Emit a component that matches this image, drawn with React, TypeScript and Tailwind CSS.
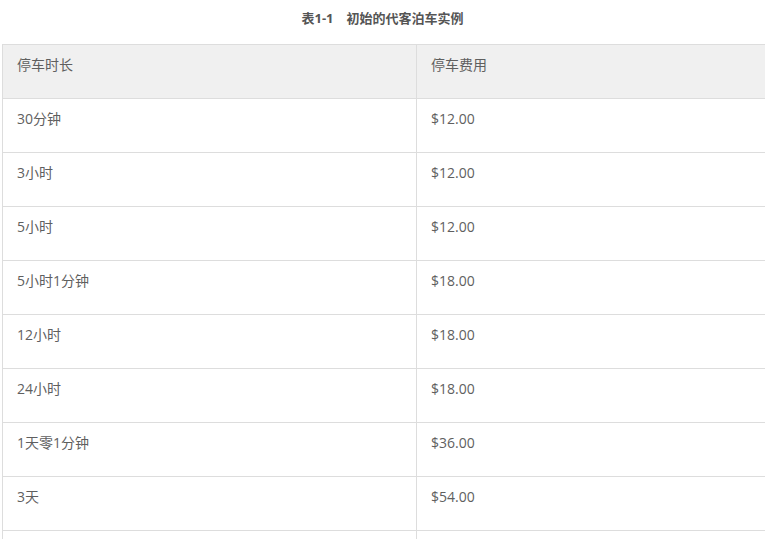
const rows: [string, string][] = [
  ["30分钟", "$12.00"],
  ["3小时", "$12.00"],
  ["5小时", "$12.00"],
  ["5小时1分钟", "$18.00"],
  ["12小时", "$18.00"],
  ["24小时", "$18.00"],
  ["1天零1分钟", "$36.00"],
  ["3天", "$54.00"],
  ["", ""],
];

export default function App() {
  return (
    <div
      className="w-[765px] h-[539px] overflow-hidden bg-white text-[#5f5f5f]"
      style={{ fontFamily: '"Open Sans", "Noto Sans CJK SC", sans-serif' }}
    >
      <div className="h-[44px] pt-[8px] text-center text-[13px] font-bold text-[#555] leading-[20px]">
        表1-1　初始的代客泊车实例
      </div>
      <div className="ml-[2px] w-[828px] border-l border-t border-[#ddd]">
        <div className="grid grid-cols-[414px_414px] h-[54px] bg-[#f0f0f0] border-b border-[#ddd] text-[14px]">
          <div className="border-r border-[#ddd] pl-[14px] pt-[9px]">停车时长</div>
          <div className="border-r border-[#ddd] pl-[14px] pt-[9px]">停车费用</div>
        </div>
        {rows.map(([a, b], i) => (
          <div key={i} className="grid grid-cols-[414px_414px] h-[54px] border-b border-[#ddd] text-[14px]">
            <div className="border-r border-[#ddd] pl-[14px] pt-[9px]">{a}</div>
            <div className="border-r border-[#ddd] pl-[14px] pt-[9px]">{b}</div>
          </div>
        ))}
      </div>
    </div>
  );
}
